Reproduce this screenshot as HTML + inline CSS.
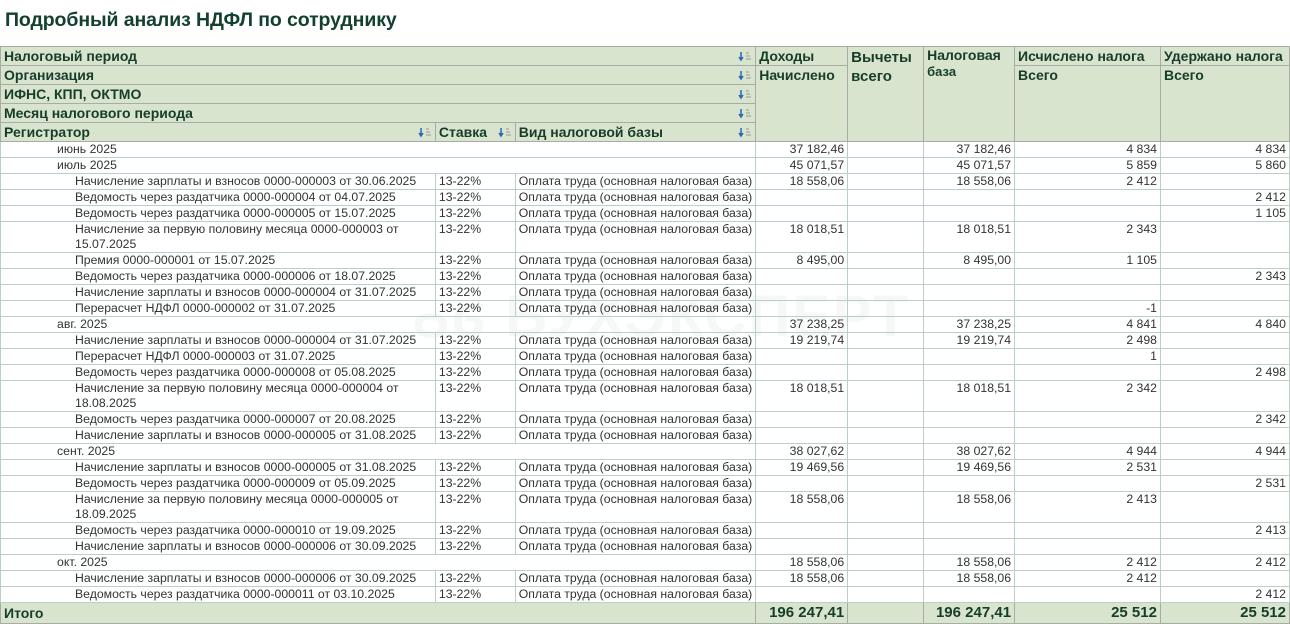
<!DOCTYPE html>
<html><head><meta charset="utf-8">
<style>
html,body{margin:0;padding:0;background:#fff;width:1290px;height:624px;overflow:hidden;font-family:"Liberation Sans",Arial,sans-serif;}
h1{position:absolute;left:5px;top:9px;margin:0;font-size:19.5px;font-weight:bold;color:#14402e;letter-spacing:-0.1px}
.wm{position:absolute;left:412px;top:282px;font-size:58px;font-weight:bold;color:#f7f7f7;letter-spacing:2px;z-index:0}
table{position:absolute;left:0;top:46px;border-collapse:collapse;table-layout:fixed;z-index:1;font-size:12.25px;color:#333}
td{padding:0 3px;border:1px solid #b9d0c4;overflow:hidden;white-space:nowrap;vertical-align:top;line-height:15px}
tr.h td{background:#d8e4cd;color:#163d2a;font-weight:bold;font-size:14px;border-color:#a6aca6;line-height:18px;position:relative}
td.r{text-align:right}
td.w{white-space:normal}
.s{position:absolute;right:3px;top:4px;width:14px;height:11px}
.g td:first-child{padding-left:56px}
.d td:first-child{padding-left:74px}
tr.t td{background:#d8e4cd;font-weight:bold;font-size:14px;color:#163d2a;border-color:#a6aca6;line-height:20px}
tr.t td.r{font-size:15px}
</style></head><body>
<h1>Подробный анализ НДФЛ по сотруднику</h1>
<div class="wm">ⴰϭ БУХЭКСПЕРТ</div>
<svg width="0" height="0" style="position:absolute"><defs><g id="si"><path d="M3 1v7M1 6l2 3 2-3" stroke="#2a66b0" stroke-width="1.5" fill="none"/><path d="M8 2h3M8 5h4M8 8h5" stroke="#999" stroke-width="1"/></g></defs></svg>
<table>
<colgroup><col style="width:435px"><col style="width:80px"><col style="width:239px"><col style="width:92px"><col style="width:76px"><col style="width:91px"><col style="width:146px"><col style="width:129px"></colgroup>
<tr class="h" style="height:19px"><td colspan="3">Налоговый период<svg class="s"><use href="#si"/></svg></td><td style="padding-right:0">Доходы</td><td rowspan="5" style="font-size:15px;line-height:19px;padding-top:1px">Вычеты<br>всего</td><td rowspan="5" style="line-height:16px">Налоговая<br><span style="font-size:13px">база</span></td><td>Исчислено налога</td><td>Удержано налога</td></tr>
<tr class="h" style="height:19px"><td colspan="3">Организация<svg class="s"><use href="#si"/></svg></td><td rowspan="4">Начислено</td><td rowspan="4">Всего</td><td rowspan="4">Всего</td></tr>
<tr class="h" style="height:19px"><td colspan="3">ИФНС, КПП, ОКТМО<svg class="s"><use href="#si"/></svg></td></tr>
<tr class="h" style="height:19px"><td colspan="3">Месяц налогового периода<svg class="s"><use href="#si"/></svg></td></tr>
<tr class="h" style="height:19px"><td>Регистратор<svg class="s"><use href="#si"/></svg></td><td>Ставка<svg class="s"><use href="#si"/></svg></td><td>Вид налоговой базы<svg class="s"><use href="#si"/></svg></td></tr>

<tr class="g" style="height:16px"><td colspan="3">июнь 2025</td><td class="r">37 182,46</td><td></td><td class="r">37 182,46</td><td class="r">4 834</td><td class="r">4 834</td></tr>
<tr class="g" style="height:16px"><td colspan="3">июль 2025</td><td class="r">45 071,57</td><td></td><td class="r">45 071,57</td><td class="r">5 859</td><td class="r">5 860</td></tr>
<tr class="d" style="height:16px"><td>Начисление зарплаты и взносов 0000-000003 от 30.06.2025</td><td>13-22%</td><td>Оплата труда (основная налоговая база)</td><td class="r">18 558,06</td><td></td><td class="r">18 558,06</td><td class="r">2 412</td><td></td></tr>
<tr class="d" style="height:16px"><td>Ведомость через раздатчика 0000-000004 от 04.07.2025</td><td>13-22%</td><td>Оплата труда (основная налоговая база)</td><td></td><td></td><td></td><td></td><td class="r">2 412</td></tr>
<tr class="d" style="height:16px"><td>Ведомость через раздатчика 0000-000005 от 15.07.2025</td><td>13-22%</td><td>Оплата труда (основная налоговая база)</td><td></td><td></td><td></td><td></td><td class="r">1 105</td></tr>
<tr class="d" style="height:31px"><td class="w">Начисление за первую половину месяца 0000-000003 от 15.07.2025</td><td>13-22%</td><td>Оплата труда (основная налоговая база)</td><td class="r">18 018,51</td><td></td><td class="r">18 018,51</td><td class="r">2 343</td><td></td></tr>
<tr class="d" style="height:16px"><td>Премия 0000-000001 от 15.07.2025</td><td>13-22%</td><td>Оплата труда (основная налоговая база)</td><td class="r">8 495,00</td><td></td><td class="r">8 495,00</td><td class="r">1 105</td><td></td></tr>
<tr class="d" style="height:16px"><td>Ведомость через раздатчика 0000-000006 от 18.07.2025</td><td>13-22%</td><td>Оплата труда (основная налоговая база)</td><td></td><td></td><td></td><td></td><td class="r">2 343</td></tr>
<tr class="d" style="height:16px"><td>Начисление зарплаты и взносов 0000-000004 от 31.07.2025</td><td>13-22%</td><td>Оплата труда (основная налоговая база)</td><td></td><td></td><td></td><td></td><td></td></tr>
<tr class="d" style="height:16px"><td>Перерасчет НДФЛ 0000-000002 от 31.07.2025</td><td>13-22%</td><td>Оплата труда (основная налоговая база)</td><td></td><td></td><td></td><td class="r">-1</td><td></td></tr>
<tr class="g" style="height:16px"><td colspan="3">авг. 2025</td><td class="r">37 238,25</td><td></td><td class="r">37 238,25</td><td class="r">4 841</td><td class="r">4 840</td></tr>
<tr class="d" style="height:16px"><td>Начисление зарплаты и взносов 0000-000004 от 31.07.2025</td><td>13-22%</td><td>Оплата труда (основная налоговая база)</td><td class="r">19 219,74</td><td></td><td class="r">19 219,74</td><td class="r">2 498</td><td></td></tr>
<tr class="d" style="height:16px"><td>Перерасчет НДФЛ 0000-000003 от 31.07.2025</td><td>13-22%</td><td>Оплата труда (основная налоговая база)</td><td></td><td></td><td></td><td class="r">1</td><td></td></tr>
<tr class="d" style="height:16px"><td>Ведомость через раздатчика 0000-000008 от 05.08.2025</td><td>13-22%</td><td>Оплата труда (основная налоговая база)</td><td></td><td></td><td></td><td></td><td class="r">2 498</td></tr>
<tr class="d" style="height:31px"><td class="w">Начисление за первую половину месяца 0000-000004 от 18.08.2025</td><td>13-22%</td><td>Оплата труда (основная налоговая база)</td><td class="r">18 018,51</td><td></td><td class="r">18 018,51</td><td class="r">2 342</td><td></td></tr>
<tr class="d" style="height:16px"><td>Ведомость через раздатчика 0000-000007 от 20.08.2025</td><td>13-22%</td><td>Оплата труда (основная налоговая база)</td><td></td><td></td><td></td><td></td><td class="r">2 342</td></tr>
<tr class="d" style="height:16px"><td>Начисление зарплаты и взносов 0000-000005 от 31.08.2025</td><td>13-22%</td><td>Оплата труда (основная налоговая база)</td><td></td><td></td><td></td><td></td><td></td></tr>
<tr class="g" style="height:16px"><td colspan="3">сент. 2025</td><td class="r">38 027,62</td><td></td><td class="r">38 027,62</td><td class="r">4 944</td><td class="r">4 944</td></tr>
<tr class="d" style="height:16px"><td>Начисление зарплаты и взносов 0000-000005 от 31.08.2025</td><td>13-22%</td><td>Оплата труда (основная налоговая база)</td><td class="r">19 469,56</td><td></td><td class="r">19 469,56</td><td class="r">2 531</td><td></td></tr>
<tr class="d" style="height:16px"><td>Ведомость через раздатчика 0000-000009 от 05.09.2025</td><td>13-22%</td><td>Оплата труда (основная налоговая база)</td><td></td><td></td><td></td><td></td><td class="r">2 531</td></tr>
<tr class="d" style="height:31px"><td class="w">Начисление за первую половину месяца 0000-000005 от 18.09.2025</td><td>13-22%</td><td>Оплата труда (основная налоговая база)</td><td class="r">18 558,06</td><td></td><td class="r">18 558,06</td><td class="r">2 413</td><td></td></tr>
<tr class="d" style="height:16px"><td>Ведомость через раздатчика 0000-000010 от 19.09.2025</td><td>13-22%</td><td>Оплата труда (основная налоговая база)</td><td></td><td></td><td></td><td></td><td class="r">2 413</td></tr>
<tr class="d" style="height:16px"><td>Начисление зарплаты и взносов 0000-000006 от 30.09.2025</td><td>13-22%</td><td>Оплата труда (основная налоговая база)</td><td></td><td></td><td></td><td></td><td></td></tr>
<tr class="g" style="height:16px"><td colspan="3">окт. 2025</td><td class="r">18 558,06</td><td></td><td class="r">18 558,06</td><td class="r">2 412</td><td class="r">2 412</td></tr>
<tr class="d" style="height:16px"><td>Начисление зарплаты и взносов 0000-000006 от 30.09.2025</td><td>13-22%</td><td>Оплата труда (основная налоговая база)</td><td class="r">18 558,06</td><td></td><td class="r">18 558,06</td><td class="r">2 412</td><td></td></tr>
<tr class="d" style="height:16px"><td>Ведомость через раздатчика 0000-000011 от 03.10.2025</td><td>13-22%</td><td>Оплата труда (основная налоговая база)</td><td></td><td></td><td></td><td></td><td class="r">2 412</td></tr>
<tr class="t" style="height:21px"><td colspan="3">Итого</td><td class="r">196 247,41</td><td></td><td class="r">196 247,41</td><td class="r">25 512</td><td class="r">25 512</td></tr>
</table>
</body></html>
